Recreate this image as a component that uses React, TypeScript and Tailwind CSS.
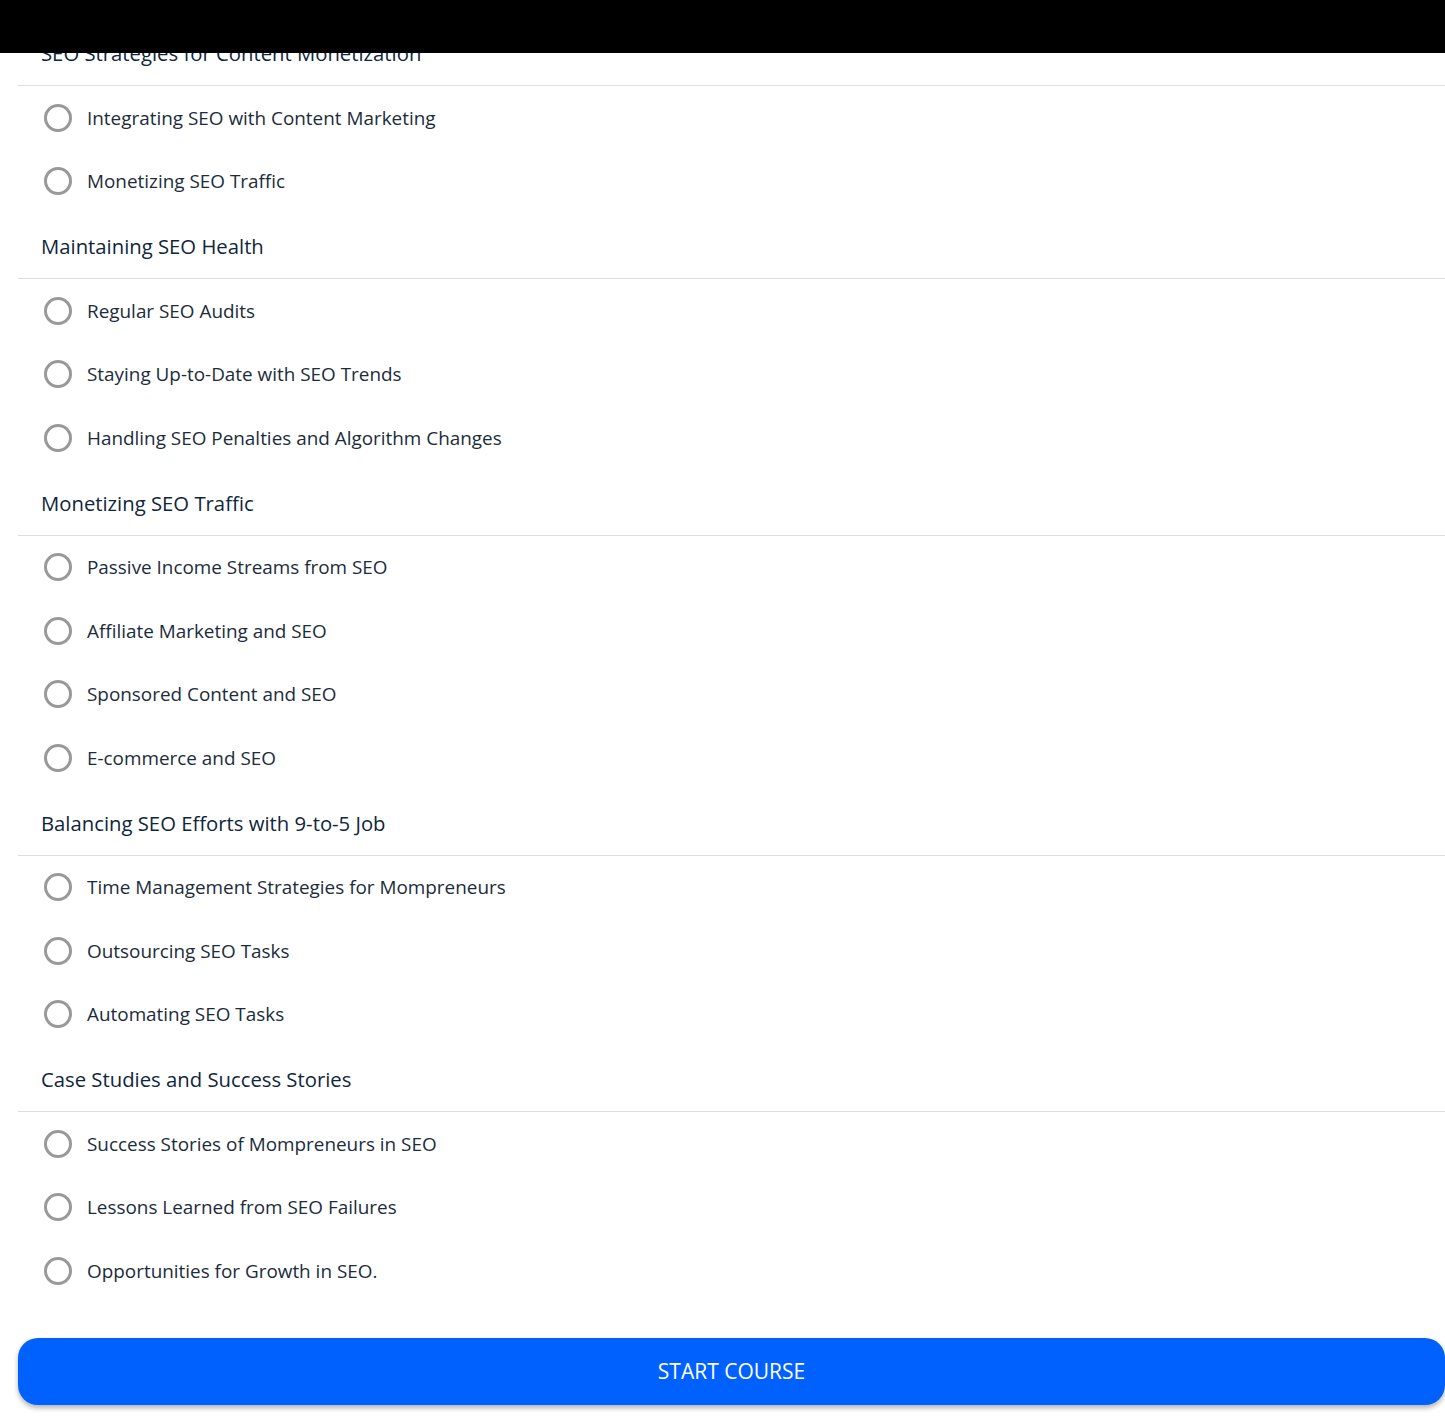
const sections = [
  {
    title: "SEO Strategies for Content Monetization",
    items: ["Integrating SEO with Content Marketing", "Monetizing SEO Traffic"],
  },
  {
    title: "Maintaining SEO Health",
    items: [
      "Regular SEO Audits",
      "Staying Up-to-Date with SEO Trends",
      "Handling SEO Penalties and Algorithm Changes",
    ],
  },
  {
    title: "Monetizing SEO Traffic",
    items: [
      "Passive Income Streams from SEO",
      "Affiliate Marketing and SEO",
      "Sponsored Content and SEO",
      "E-commerce and SEO",
    ],
  },
  {
    title: "Balancing SEO Efforts with 9-to-5 Job",
    items: [
      "Time Management Strategies for Mompreneurs",
      "Outsourcing SEO Tasks",
      "Automating SEO Tasks",
    ],
  },
  {
    title: "Case Studies and Success Stories",
    items: [
      "Success Stories of Mompreneurs in SEO",
      "Lessons Learned from SEO Failures",
      "Opportunities for Growth in SEO.",
    ],
  },
];

const Heading = ({ title }: { title: string }) => (
  <div className="h-[66px] flex items-center pl-[23px] pt-[2px] border-b border-[#dedede] text-[20.3px] text-[#10263b]">
    {title}
  </div>
);

const Item = ({ label }: { label: string }) => (
  <div className="h-[63.5px] flex items-center pl-[26px] gap-[15px]">
    <span className="w-[28px] h-[28px] rounded-full border-[3px] border-[#999999] shrink-0" />
    <span className="text-[18.9px] text-[#1c2c3c]">{label}</span>
  </div>
);

export default function App() {
  return (
    <div className="w-[1445px] min-h-[1428px] bg-white" style={{ fontFamily: '"Open Sans", "Noto Sans", sans-serif' }}>
      <div className="h-[53px] bg-black" />
      <div className="pl-[18px]">
        {sections.map((s, i) => (
          <div key={s.title}>
            {i === 0 ? (
              <div className="h-[33px] overflow-hidden">
                <div className="-mt-[33px]">
                  <Heading title={s.title} />
                </div>
              </div>
            ) : (
              <Heading title={s.title} />
            )}
            {s.items.map((it) => (
              <Item key={it} label={it} />
            ))}
          </div>
        ))}
        <div className="pt-[35px] pb-[23px]">
          <button className="w-full h-[67px] rounded-[20px] bg-[#0061fe] text-white text-[21px] pt-[1px] shadow-[0_3px_5px_rgba(0,0,0,0.3)]">
            START COURSE
          </button>
        </div>
      </div>
    </div>
  );
}
